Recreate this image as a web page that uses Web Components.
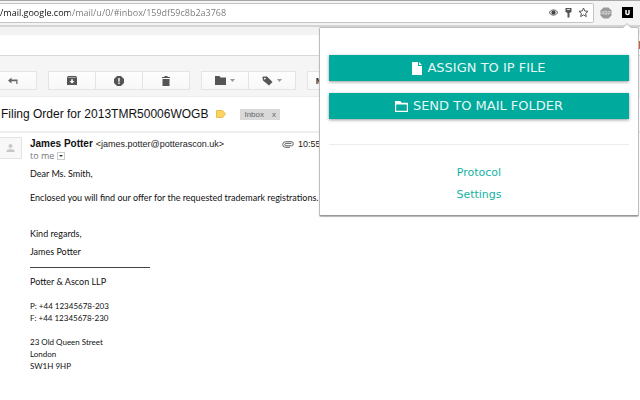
<!DOCTYPE html>
<html lang="en">
<head>
<meta charset="utf-8">
<title>Filing Order for 2013TMR50006WOGB</title>
<style>
    body {
        margin: 0;
        background: #fff;
        overflow: hidden;
        font-family: "Liberation Sans", sans-serif;
    }
</style>
</head>
<body>
<mail-window></mail-window>

<script>
class AddressBar extends HTMLElement {
    constructor() {
        super();
        this.attachShadow({ mode: 'open' });
    }

    connectedCallback() {
        this.shadowRoot.innerHTML = `
            <style>
                :host {
                    display: flex;
                    align-items: center;
                    box-sizing: border-box;
                    height: 27px;
                    padding: 0 7px 1px 0;
                    background: #f4f4f4;
                    border-top: 1px solid #a9a6a9;
                    border-bottom: 2px solid #d4d4d4;
                }
                .field {
                    flex: 1;
                    display: flex;
                    align-items: center;
                    gap: 4px;
                    box-sizing: border-box;
                    height: 20px;
                    padding-right: 4px;
                    background: #fff;
                    border: 1px solid #c4c4c4;
                    border-width: 1px 1px 1px 0;
                    border-radius: 0 2px 2px 0;
                }
                /* host name dark, path grey */
                input {
                    flex: 1;
                    min-width: 0;
                    padding: 0;
                    border: 0;
                    outline: 0;
                    font: 9px/16px "Open Sans", sans-serif;
                    color: transparent;
                    background: linear-gradient(90deg, #111 70px, #777 70px);
                    -webkit-background-clip: text;
                    background-clip: text;
                }
                button {
                    display: block;
                    padding: 0;
                    border: 0;
                    background: none;
                }
                svg { display: block; }
                .extensions {
                    display: flex;
                    align-items: center;
                    gap: 10px;
                    padding-left: 6px;
                }
            </style>
            <div class="field">
                <input type="text" aria-label="Address" value="/mail.google.com/mail/u/0/#inbox/159df59c8b2a3768">
                <button aria-label="View"><svg width="11" height="11" viewBox="0 0 11 11"><path d="M1 5.500Q5.500 0 10 5.500Q5.500 11 1 5.500Z" fill="#ddd" stroke="#666"/><circle cx="5.500" cy="5.500" r="2" fill="#444"/></svg></button>
                <button aria-label="Passwords"><svg width="11" height="11" viewBox="0 0 11 11"><path d="M2.500 1h6v4l-2 1v4.500h-2V6l-2-1Z" fill="#555"/><path d="M4 2.500h3" stroke="#ddd"/></svg></button>
                <button aria-label="Bookmark"><svg width="11" height="11" viewBox="0 0 11 11"><path d="M5.500 1l1.300 3 3.200.300-2.400 2.100.7 3.200-2.800-1.700-2.800 1.700.7-3.200L1 4.300 4.200 4Z" fill="#fff" stroke="#555"/></svg></button>
            </div>
            <div class="extensions">
                <button aria-label="Ad blocker"><svg width="12" height="12" viewBox="0 0 12 12"><path d="M3.500.5h5l3 3v5l-3 3h-5l-3-3v-5Z" fill="#999"/><path d="M2 7.500V5l1-1 1 1v2.500M2 6.500h2M5 4v3.500h1.500v-3.500ZM8 8V4.500h2v2H8" fill="none" stroke="#ddd" stroke-width=".7"/></svg></button>
                <button aria-label="Extension"><svg width="11" height="11" viewBox="0 0 11 11"><path d="M0 0h11v11H0Z"/><path d="M4 3v3.500q0 1 1.500 1t1.500-1V3" fill="none" stroke="#fff" stroke-width="1.500"/></svg></button>
            </div>
        `;
    }
}

class ToolButton extends HTMLElement {
    constructor() {
        super();
        this.attachShadow({ mode: 'open' });
    }

    connectedCallback() {
        const arrow = this.hasAttribute('menu')
            ? '<svg width="5" height="3" viewBox="0 0 5 3"><path d="M0 0h5L2.500 3Z" fill="#999"/></svg>'
            : '';
        this.shadowRoot.innerHTML = `
            <style>
                :host { display: block; }
                button {
                    display: flex;
                    align-items: center;
                    justify-content: center;
                    gap: 4px;
                    box-sizing: border-box;
                    width: 48px;
                    height: 19px;
                    margin-right: -1px;
                    padding: 0;
                    border: 1px solid #e4e4e4;
                    background: linear-gradient(#fdfdfd, #f8f8f8);
                    font: bold 9px/16px "Liberation Sans", sans-serif;
                    color: #333;
                }
                svg, ::slotted(svg) { display: block; }
            </style>
            <button aria-label="${this.getAttribute('label')}"><slot></slot>${arrow}</button>
        `;
    }
}

class MailToolbar extends HTMLElement {
    constructor() {
        super();
        this.attachShadow({ mode: 'open' });
    }

    connectedCallback() {
        this.shadowRoot.innerHTML = `
            <style>
                :host {
                    display: flex;
                    align-items: center;
                    gap: 12px;
                    box-sizing: border-box;
                    height: 42px;
                    margin-left: -11px;
                    padding-top: 9px;
                    background: #f5f5f5;
                    border-top: 1px solid #d8d8d8;
                    border-bottom: 1px solid #ececec;
                }
                .group { display: flex; }
            </style>
            <div class="group">
                <tool-button label="Back"><svg width="11" height="8" viewBox="0 0 11 8"><path d="M0 3.500L3.500.5v2H9.500V7H8.300V4.300H3.500v2.200Z" fill="#666"/></svg></tool-button>
            </div>
            <div class="group">
                <tool-button label="Archive"><svg width="10" height="9" viewBox="0 0 10 9"><path d="M1 0h8l1 1.500V9H0V1.500Z" fill="#555"/><path d="M1.300 1h7.400v.7H1.300Z" fill="#ccc"/><path d="M4.200 3.200h1.600V5h1.700L5 7.500 2.500 5h1.700Z" fill="#fff"/></svg></tool-button>
                <tool-button label="Report spam"><svg width="10" height="10" viewBox="0 0 10 10"><path d="M3 0h4l3 3v4L7 10H3L0 7V3Z" fill="#555"/><path d="M4.300 2h1.400v3.700H4.300ZM4.300 6.600h1.400V8H4.300Z" fill="#fff"/></svg></tool-button>
                <tool-button label="Delete"><svg width="8" height="10" viewBox="0 0 8 10"><path d="M0 1h2.500V0h3v1H8v1H0ZM.5 3h7v7h-7Z" fill="#555"/></svg></tool-button>
            </div>
            <div class="group">
                <tool-button label="Move to" menu><svg width="11" height="9" viewBox="0 0 11 9"><path d="M0 0h4.500l1 1.500H11V9H0Z" fill="#555"/></svg></tool-button>
                <tool-button label="Labels" menu><svg width="11" height="10" viewBox="0 0 11 10"><path d="M.5 1.500Q.5.5 1.500.5H5L10.500 6 7 9.500 1 4.500Z" fill="#555"/><circle cx="2.800" cy="2.600" r=".9" fill="#fff"/></svg></tool-button>
            </div>
            <div class="group">
                <tool-button label="More" menu>More</tool-button>
            </div>
        `;
    }
}

class MailSubject extends HTMLElement {
    constructor() {
        super();
        this.attachShadow({ mode: 'open' });
    }

    connectedCallback() {
        this.shadowRoot.innerHTML = `
            <style>
                :host {
                    display: flex;
                    align-items: center;
                    height: 34px;
                    border-bottom: 2px solid #efefef;
                }
                h1 {
                    margin: 0 8px 0 1px;
                    font: 12px/16px "Liberation Sans", sans-serif;
                    color: #111;
                }
                .tag {
                    display: flex;
                    gap: 8px;
                    margin-left: 14px;
                    padding: 0 4px;
                    background: #d9d9d9;
                    font-size: 8px;
                    line-height: 11px;
                    color: #666;
                }
                button {
                    padding: 0;
                    border: 0;
                    background: none;
                    font: inherit;
                    color: inherit;
                }
            </style>
            <h1><slot></slot></h1>
            <svg width="10" height="8" viewBox="0 0 10 8"><path d="M.5.5h6L9.500 4l-3 3.500h-6Z" fill="#fcd462" stroke="#e8bd4c"/></svg>
            <span class="tag"><span>Inbox</span><button aria-label="Remove label">x</button></span>
        `;
    }
}

class MailMessage extends HTMLElement {
    constructor() {
        super();
        this.attachShadow({ mode: 'open' });
    }

    connectedCallback() {
        this.shadowRoot.innerHTML = `
            <style>
                :host {
                    display: grid;
                    grid-template-columns: 22px 1fr;
                    column-gap: 8px;
                    padding-top: 4px;
                }
                .avatar {
                    box-sizing: border-box;
                    width: 22px;
                    height: 22px;
                    border: 1px solid #e4e4e4;
                    border-left: 0;
                    background: #f8f8f8;
                }
                svg { display: block; }
                .from {
                    display: flex;
                    align-items: center;
                    height: 14px;
                    font-size: 9px;
                    line-height: 14px;
                    color: #222;
                    white-space: nowrap;
                }
                .from b { margin-right: 3px; font-size: 10px; color: #111; }
                .clip { margin: 0 4px 0 58px; }
                .to {
                    display: flex;
                    align-items: center;
                    gap: 3px;
                    font: 9px/10px "Open Sans", sans-serif;
                    color: #777;
                }
                .to button {
                    display: grid;
                    place-items: center;
                    box-sizing: border-box;
                    width: 8px;
                    height: 8px;
                    padding: 0;
                    border: 1px solid #ccc;
                    background: #fff;
                }
                .body {
                    padding-top: 7px;
                    font: 9px/12px Lato, "Open Sans", sans-serif;
                    color: #111;
                }
            </style>
            <div class="avatar"><svg width="21" height="20" viewBox="0 0 21 20"><circle cx="10.500" cy="8" r="2" fill="#c8c8c8"/><path d="M6.500 14v-1.500q1-1.500 4-1.500t4 1.500V14Z" fill="#c8c8c8"/></svg></div>
            <div>
                <div class="from">
                    <b><slot name="sender"></slot></b>
                    <slot name="address"></slot>
                    <svg class="clip" width="12" height="7" viewBox="0 0 12 7"><path d="M9.500 4.800H4a1.200 1.200 0 0 1 0-2.400H9.500M8 6.300H3.500a2.800 2.800 0 0 1 0-5.600H9a1.900 1.900 0 0 1 .5 4.100" fill="none" stroke="#555" stroke-width=".9"/></svg>
                    <slot name="time"></slot>
                </div>
                <div class="to">to me <button aria-label="Show details"><svg width="4" height="2" viewBox="0 0 4 2"><path d="M0 0h4L2 2Z" fill="#333"/></svg></button></div>
                <div class="body"><slot></slot></div>
            </div>
        `;
    }
}

class PopupButton extends HTMLElement {
    constructor() {
        super();
        this.attachShadow({ mode: 'open' });
    }

    connectedCallback() {
        this.shadowRoot.innerHTML = `
            <style>
                :host { display: block; }
                button {
                    display: flex;
                    align-items: center;
                    justify-content: center;
                    gap: 5px;
                    width: 100%;
                    height: 26px;
                    padding: 0;
                    border: 0;
                    background: #00aa9d;
                    box-shadow: 0 1px 3px rgba(0, 0, 0, .4);
                    color: #e6f7f5;
                    font: 13px/16px "DejaVu Sans", sans-serif;
                }
            </style>
            <button><slot name="icon"></slot><slot></slot></button>
        `;
    }
}

class ExtensionPopup extends HTMLElement {
    constructor() {
        super();
        this.attachShadow({ mode: 'open' });
    }

    connectedCallback() {
        this.shadowRoot.innerHTML = `
            <style>
                :host {
                    display: block;
                    box-sizing: border-box;
                    padding: 27px 9px 9px;
                    background: #fff;
                    border: 1px solid #bdbdbd;
                    border-bottom-color: #999;
                    border-radius: 2px;
                    box-shadow: 0 1px 1px rgba(0, 0, 0, .3);
                }
                .arrow { position: absolute; top: -5px; right: 5px; }
                .actions { display: grid; gap: 12px; }
                hr { margin: 25px 0 17px; border: 0; border-top: 1px solid #ececec; }
                nav {
                    display: flex;
                    flex-direction: column;
                    align-items: center;
                    font: 11px/22px "DejaVu Sans", sans-serif;
                }
                a { color: #12b3a3; text-decoration: none; }
                svg { display: block; }
            </style>
            <svg class="arrow" width="12" height="6" viewBox="0 0 12 6"><path d="M1 6L6 .7 11 6Z" fill="#fff"/><path d="M0 4.500h1.500L6 .7l4.500 3.800H12" fill="none" stroke="#bdbdbd"/></svg>
            <div class="actions">
                <popup-button><svg slot="icon" width="10" height="13" viewBox="0 0 10 13"><path d="M0 0h6v4h4v9H0ZM7 0l3 3H7Z" fill="#fff"/></svg>ASSIGN TO IP FILE</popup-button>
                <popup-button><svg slot="icon" width="13" height="11" viewBox="0 0 13 11"><path d="M.6 10.400V.6h4.400l1.200 1.800h6.200v8Z" fill="none" stroke="#fff" stroke-width="1.200"/><path d="M.5.5h4.500l1.500 2h6v1H.5Z" fill="#fff"/></svg>SEND TO MAIL FOLDER</popup-button>
            </div>
            <hr>
            <nav><a href="#protocol">Protocol</a><a href="#settings">Settings</a></nav>
        `;
    }
}

class MailWindow extends HTMLElement {
    constructor() {
        super();
        this.attachShadow({ mode: 'open' });
    }

    connectedCallback() {
        this.shadowRoot.innerHTML = `
            <style>
                :host { display: block; position: relative; }
                .search {
                    display: flex;
                    align-items: center;
                    justify-content: flex-end;
                    height: 20px;
                    border-top: 8px solid #f2f2f2;
                    background: #fff;
                }
                .badge { width: 8px; height: 8px; background: #d9603b; }
                /* the popup hangs from its toolbar icon, over the mail */
                extension-popup { position: absolute; top: 27px; right: 1px; width: 50%; }
                p { margin: 0 0 12px; }
                p.close { margin: 24px 0 6px; }
                p.name { margin: 0 0 9px; }
                p.contact { font-size: 8px; }
                hr { width: 120px; margin: 0 0 8px; border: 0; border-top: 1px solid #444; }
            </style>
            <address-bar></address-bar>
            <div class="search"><span class="badge"></span></div>
            <mail-toolbar></mail-toolbar>
            <mail-subject>Filing Order for 2013TMR50006WOGB</mail-subject>
            <mail-message>
                <span slot="sender">James Potter</span>
                <span slot="address">&lt;james.potter@potterascon.uk&gt;</span>
                <span slot="time">10:55</span>
                <p>Dear Ms. Smith,</p>
                <p>Enclosed you will find our offer for the requested trademark registrations.</p>
                <p class="close">Kind regards,</p>
                <p class="name">James Potter</p>
                <hr>
                <p>Potter &amp; Ascon LLP</p>
                <p class="contact">P: +44 12345678-203<br>F: +44 12345678-230</p>
                <p class="contact">23 Old Queen Street<br>London<br>SW1H 9HP</p>
            </mail-message>
            <extension-popup></extension-popup>
        `;
    }
}

customElements.define('address-bar', AddressBar);
customElements.define('tool-button', ToolButton);
customElements.define('mail-toolbar', MailToolbar);
customElements.define('mail-subject', MailSubject);
customElements.define('mail-message', MailMessage);
customElements.define('popup-button', PopupButton);
customElements.define('extension-popup', ExtensionPopup);
customElements.define('mail-window', MailWindow);
</script>
</body>
</html>
